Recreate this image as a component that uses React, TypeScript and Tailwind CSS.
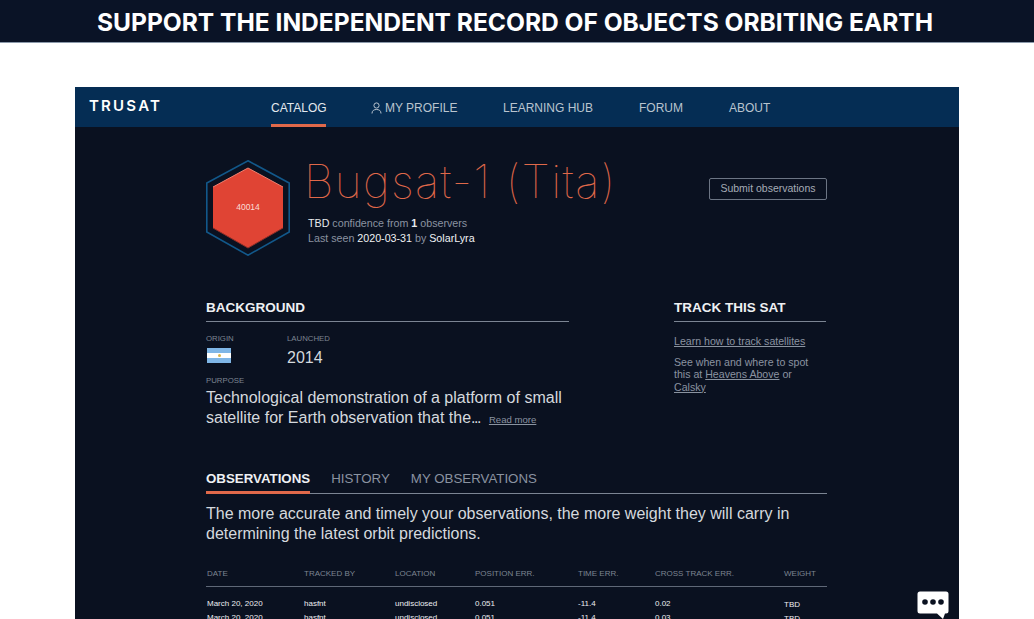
import React from 'react';

const navItems = ['LEARNING HUB', 'FORUM', 'ABOUT'];

const columns = [
  { label: 'DATE', width: 'w-[97px]' },
  { label: 'TRACKED BY', width: 'w-[91px]' },
  { label: 'LOCATION', width: 'w-[80px]' },
  { label: 'POSITION ERR.', width: 'w-[103px]' },
  { label: 'TIME ERR.', width: 'w-[77px]' },
  { label: 'CROSS TRACK ERR.', width: 'w-[129px]' },
  { label: 'WEIGHT', width: 'w-[43px]' },
];

const rows = [
  ['March 20, 2020', 'hasfnt', 'undisclosed', '0.051', '-11.4', '0.02', 'TBD'],
  ['March 20, 2020', 'hasfnt', 'undisclosed', '0.051', '-11.4', '0.03', 'TBD'],
];

function Hexagon() {
  return (
    <svg width="84" height="96" viewBox="0 0 84 96" className="shrink-0">
      <polygon points="42,0.8 83.2,23 83.2,72 42,95.2 0.8,72 0.8,23" fill="none" stroke="#12588a" strokeWidth="1.6" />
      <polygon points="42,8 77,27 77,68 42,88 7,68 7,27" fill="#e04434" />
      <polyline points="7,27 42,8 77,27" fill="none" stroke="#f0806f" strokeWidth="1" />
      <polyline points="7,68 42,88 77,68" fill="none" stroke="#8a2f28" strokeWidth="1" />
      <text x="42" y="50" textAnchor="middle" fontSize="8.5" fill="#fbdcd6" fontFamily="Liberation Sans, sans-serif">40014</text>
    </svg>
  );
}

function Flag() {
  return (
    <div className="w-[24px] h-[15px] flex flex-col ml-[1px]">
      <div className="h-[5px] bg-[#7fb6e6]" />
      <div className="h-[5px] bg-white flex items-center justify-center">
        <div className="w-[3px] h-[3px] rounded-full bg-[#d9b44a]" />
      </div>
      <div className="h-[5px] bg-[#7fb6e6]" />
    </div>
  );
}

export default function App() {
  return (
    <div className="relative w-[1034px] h-[619px] overflow-hidden bg-white font-['Liberation_Sans',sans-serif]">
      {/* Banner */}
      <div className="h-[43px] bg-[#0a1326] border-b border-[#8b99aa] flex items-center justify-center pr-[4px]">
        <h1 className="font-['Inter',sans-serif] font-bold text-[24.55px] leading-none text-white pt-[2px] whitespace-nowrap">
          SUPPORT THE INDEPENDENT RECORD OF OBJECTS ORBITING EARTH
        </h1>
      </div>

      <div className="ml-[75px] mt-[44px] w-[884px] h-[532px] bg-[#0a1120] overflow-hidden">
        {/* Nav */}
        <nav className="h-[40px] bg-[#052d54] flex text-[12px] text-[#b9c4cf]">
          <div className="w-[196px] pl-[14px] pt-[11px] font-['Inter',sans-serif] font-semibold text-[15px] leading-[16px] tracking-[2.2px] text-white">
            TRUSAT
          </div>
          <div className="w-[55px] h-[40px] border-b-[3px] border-[#e0694a] pt-[14px] leading-[15px] text-[#e4e9ee] whitespace-nowrap">
            CATALOG
          </div>
          <div className="ml-[45px] w-[132px] pt-[14px] leading-[15px] flex items-start whitespace-nowrap">
            <svg width="11" height="12" viewBox="0 0 11 12" fill="none" stroke="#b9c4cf" strokeWidth="1" className="mr-[3px] mt-[1px]">
              <circle cx="5.5" cy="3.5" r="2.6" />
              <path d="M1 11.5 C1 8.5 3 7.5 5.5 7.5 C8 7.5 10 8.5 10 11.5" />
            </svg>
            MY PROFILE
          </div>
          {navItems.map((item, i) => (
            <div
              key={item}
              className={`pt-[14px] leading-[15px] whitespace-nowrap ${i === 0 ? 'w-[136px]' : i === 1 ? 'w-[90px]' : 'w-[60px]'}`}
            >
              {item}
            </div>
          ))}
        </nav>

        <div className="ml-[131px] w-[621px]">
          {/* Header */}
          <div className="flex pt-[33px] h-[164px]">
            <Hexagon />
            <div className="ml-[18px] w-[401px]">
              <div className="font-['Inter',sans-serif] font-thin text-[46px] leading-[50px] tracking-[1.3px] text-[#e0694a] -mt-[4px] -ml-[4px] whitespace-nowrap">
                Bugsat-1 (Tita)
              </div>
              <div className="mt-[10px] text-[10.7px] leading-[15px] text-[#8a93a0]">
                <p><span className="text-[#e8ebee]">TBD</span> confidence from <span className="font-bold text-[#e8ebee]">1</span> observers</p>
                <p>Last seen <span className="text-[#f0f2f4]">2020-03-31</span> by <span className="text-[#f0f2f4]">SolarLyra</span></p>
              </div>
            </div>
            <div className="mt-[18px] h-[22px] w-[118px] border border-[#6c7584] rounded-[2px] flex items-center justify-center text-[10.5px] text-[#a5acb6]">
              Submit observations
            </div>
          </div>

          {/* Background + Track */}
          <div className="flex h-[171px]">
            <div className="w-[363px]">
              <h2 className="text-[13.5px] leading-[16px] font-bold text-[#eef0f3] pt-[9px] pb-[5px] border-b border-[#7c8593] box-content">
                BACKGROUND
              </h2>
              <div className="flex mt-[12px]">
                <div className="w-[81px]">
                  <div className="text-[7.8px] leading-[10px] text-[#7d8592]">ORIGIN</div>
                  <div className="mt-[4px]"><Flag /></div>
                </div>
                <div>
                  <div className="text-[7.8px] leading-[10px] text-[#7d8592]">LAUNCHED</div>
                  <div className="mt-[4px] text-[16px] leading-[20px] text-[#d5d9de]">2014</div>
                </div>
              </div>
              <div className="mt-[8px] text-[7.8px] leading-[10px] text-[#7d8592]">PURPOSE</div>
              <p className="mt-[2px] text-[16px] leading-[20px] text-[#d5d9de] whitespace-nowrap">
                Technological demonstration of a platform of small<br />
                satellite for Earth observation that the<span className="tracking-[-1.5px]">...</span>
                <span className="ml-[9px] text-[9.6px] text-[#8a93a0] underline">Read more</span>
              </p>
            </div>
            <div className="ml-[105px] w-[152px]">
              <h2 className="text-[13.5px] leading-[16px] font-bold text-[#eef0f3] pt-[9px] pb-[5px] border-b border-[#7c8593] box-content">
                TRACK THIS SAT
              </h2>
              <div className="mt-[13px] text-[10.6px] leading-[12.5px] text-[#8a93a0]">
                <p className="underline">Learn how to track satellites</p>
                <p className="mt-[8px]">
                  See when and where to spot<br />
                  this at <span className="underline">Heavens Above</span> or<br />
                  <span className="underline">Calsky</span>
                </p>
              </div>
            </div>
          </div>

          {/* Tabs */}
          <div className="flex h-[31px] border-b border-[#7c8593] text-[13.3px] leading-[16px] text-[#8a93a0] box-content -mb-[1px]">
            <div className="h-[32px] border-b-[3px] border-[#e0694a] pt-[9px] font-bold text-[#eef0f3]">OBSERVATIONS</div>
            <div className="ml-[21px] pt-[9px]">HISTORY</div>
            <div className="ml-[21px] pt-[9px]">MY OBSERVATIONS</div>
          </div>

          <p className="mt-[11px] text-[16px] leading-[20px] text-[#d5d9de] whitespace-nowrap">
            The more accurate and timely your observations, the more weight they will carry in<br />
            determining the latest orbit predictions.
          </p>

          {/* Table */}
          <div className="mt-[20px] flex h-[23px] border-b border-[#5f6877] text-[8px] leading-[10px] text-[#7d8592] pl-[1px]">
            {columns.map((c) => (
              <div key={c.label} className={`${c.width} pt-[5px] whitespace-nowrap`}>{c.label}</div>
            ))}
          </div>
          <div className="pt-[10px] text-[8px] leading-[14px] text-[#eceef1] pl-[1px]">
            {rows.map((row, r) => (
              <div key={r} className="flex h-[14px]">
                {row.map((cell, i) => (
                  <div key={i} className={`${columns[i].width} whitespace-nowrap ${i === 6 ? 'pt-[1px]' : ''}`}>{cell}</div>
                ))}
              </div>
            ))}
          </div>
        </div>
      </div>

      {/* Chat bubble */}
      <svg width="32" height="30" viewBox="0 0 32 30" className="absolute left-[917px] top-[590px]">
        <path d="M3 1.5 H29 A2.5 2.5 0 0 1 31.5 4 V21 A2.5 2.5 0 0 1 29 23.5 H28 L26 29 L20 23.5 H3 A2.5 2.5 0 0 1 0.5 21 V4 A2.5 2.5 0 0 1 3 1.5 Z" fill="#ffffff" />
        <circle cx="8" cy="12" r="2.8" fill="#0a1120" />
        <circle cx="16" cy="12" r="2.8" fill="#0a1120" />
        <circle cx="24" cy="12" r="2.8" fill="#0a1120" />
      </svg>
    </div>
  );
}
